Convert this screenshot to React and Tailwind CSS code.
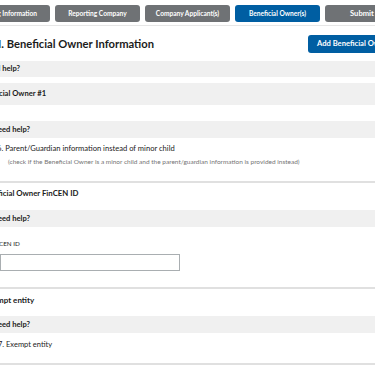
export default function App() {
  const font = { fontFamily: '"Source Sans Pro", Lato, "Liberation Sans", sans-serif' };
  const tab = "w-[85px] h-[17px] shrink-0 rounded-[3px] flex items-center text-white font-bold text-[6.6px]";
  const bar = "bg-[#f0f0f0] flex items-center text-[7.6px] font-bold text-[#1b1b1b] whitespace-nowrap";
  return (
    <div className="w-[375px] h-[366px] overflow-hidden bg-white text-[#1b1b1b]" style={font}>
      <div className="flex gap-[5px] -ml-[35px] pt-[5px] whitespace-nowrap">
        <div className={tab + " bg-[#6f7275] justify-end pr-[13px]"}>Filing Information</div>
        <div className={tab + " bg-[#6f7275] justify-center"}>Reporting Company</div>
        <div className={tab + " bg-[#6f7275] justify-center"}>Company Applicant(s)</div>
        <div className={tab + " bg-[#005ea2] justify-center"}>Beneficial Owner(s)</div>
        <div className={tab + " bg-[#6f7275] justify-start pl-[25px] text-[7.6px]"}>Submit</div>
      </div>
      <div className="mt-[3px] h-px bg-[#e6e6e6]" />
      <div className="flex items-center justify-between mt-[9px] h-[18px]">
        <div className="text-[11.2px] font-bold whitespace-nowrap -ml-[2px] pt-px">I. Beneficial Owner Information</div>
        <div className="h-[18px] w-[80px] shrink-0 -mr-[13px] bg-[#005ea2] rounded-[3px] flex items-center pl-[9px] text-white font-bold text-[7.6px] whitespace-nowrap overflow-hidden">Add Beneficial Owner</div>
      </div>
      <div className={bar + " mt-[8px] h-[16px]"}><span className="-ml-[4px]">d help?</span></div>
      <div className={bar + " mt-[6px] h-[22px]"}><span className="-ml-[1px]">cial Owner #1</span></div>
      <div className={bar + " mt-[16px] h-[17px]"}><span className="-ml-[2px]">eed help?</span></div>
      <div className="mt-[3px] text-[7.6px] whitespace-nowrap -ml-[3px] leading-[14px]">6. Parent/Guardian information instead of minor child</div>
      <div className="mt-[2px] text-[6.5px] text-[#757575] whitespace-nowrap ml-[8px] leading-[10px]">(check if the Beneficial Owner is a minor child and the parent/guardian information is provided instead)</div>
      <div className="mt-[14px] h-[2px] bg-[#e0e0e0]" />
      <div className="mt-[4px] text-[7.8px] font-bold whitespace-nowrap -ml-[2px] leading-[12px]">ficial Owner FinCEN ID</div>
      <div className={bar + " mt-[11px] h-[17px]"}><span className="-ml-[2px]">eed help?</span></div>
      <div className="mt-[12px] text-[6.3px] whitespace-nowrap -ml-[1px] leading-[10px]">CEN ID</div>
      <div className="mt-[5px] h-[17px] w-[180px] border border-[#a9aeb1] bg-white" />
      <div className="mt-[16px] h-[2px] bg-[#e0e0e0]" />
      <div className="mt-[5px] text-[8px] font-bold whitespace-nowrap -ml-[3px] leading-[12px]">mpt entity</div>
      <div className={bar + " mt-[10px] h-[17px]"}><span className="-ml-[2px]">eed help?</span></div>
      <div className="mt-[6px] text-[7.5px] whitespace-nowrap -ml-[2px] leading-[12px]">7. Exempt entity</div>
      <div className="mt-[12px] h-[2px] bg-[#e0e0e0]" />
    </div>
  );
}
